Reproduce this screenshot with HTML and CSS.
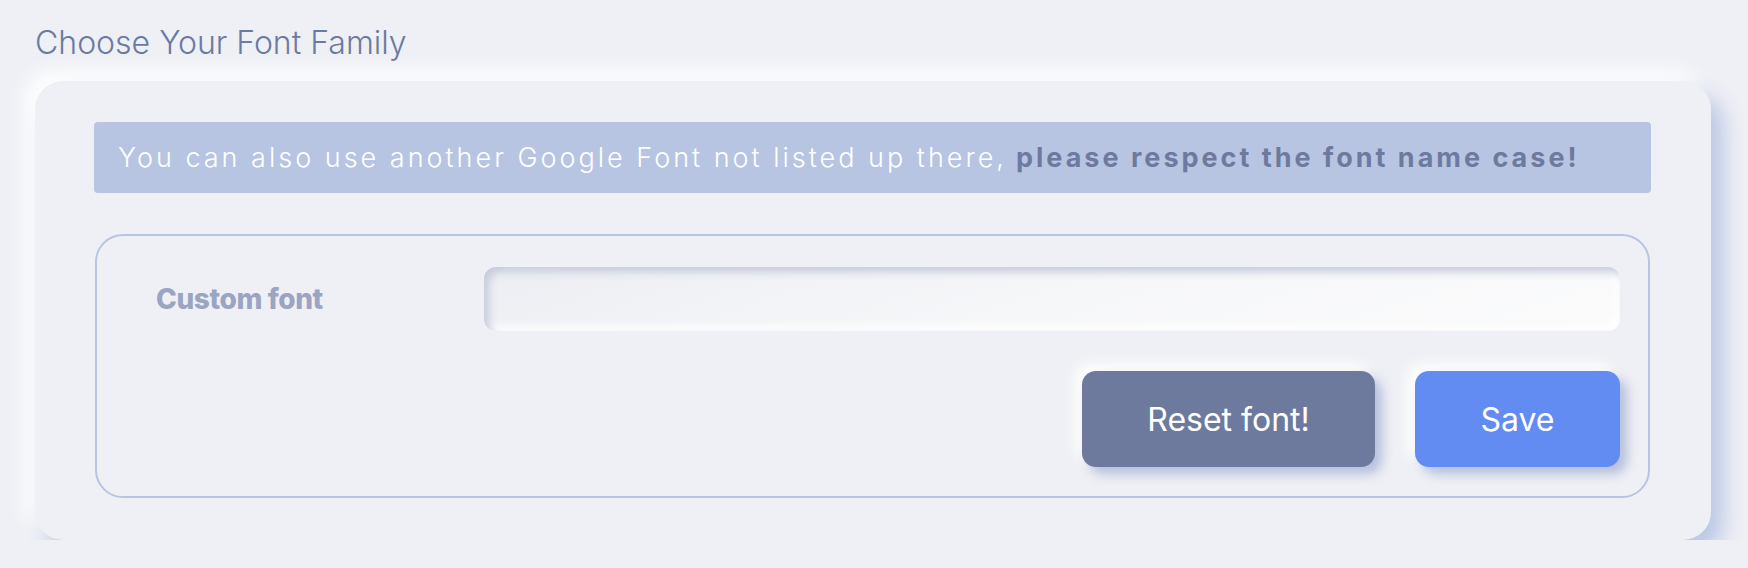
FILE: index.html
```html
<!DOCTYPE html>
<html lang="en">
<head>
    <meta charset="UTF-8">
    <meta name="viewport" content="width=device-width, initial-scale=1.0">
    <title>Font settings</title>
    <link rel="stylesheet" href="styles.css">
</head>
<body>
    <div class="section">
        <h2 class="section-title">Choose Your Font Family</h2>
        <div class="card">
            <div class="notice">
                You can also use another Google Font not listed up there, <b>please respect the font name case!</b>
            </div>
            <div class="font-box">
                <div class="font-row">
                    <label class="font-label" for="custom_font">Custom font</label>
                    <input id="custom_font" class="font-input" type="text">
                </div>
                <div class="font-actions">
                    <button class="btn btn-reset">Reset font!</button>
                    <button class="btn btn-save">Save</button>
                </div>
            </div>
        </div>
    </div>
</body>
</html>
```

FILE: styles.css
```css
* {
    margin: 0;
    padding: 0;
    box-sizing: border-box;
}

body {
    background-color: #eff0f5;
    font-family: Inter, "Noto Sans", sans-serif;
}

.section {
    padding: 24px 37px 0 35px;
}

.section-title {
    font-size: 32px;
    font-weight: 300;
    line-height: 38px;
    color: #6b7aa1;
    margin-bottom: 19px;
}

.card {
    height: 459px;
    padding: 41px 60px 42px 59px;
    border-radius: 28px;
    background-color: #eff0f5;
    box-shadow: 12px 14px 22px #b9c6e4, -10px -10px 20px #ffffff;
}

.notice {
    height: 71px;
    padding-left: 24px;
    display: flex;
    align-items: center;
    white-space: nowrap;
    border-radius: 4px;
    background-color: #b8c5e2;
    color: #ffffff;
    font-size: 27px;
    font-weight: 300;
    letter-spacing: 3px;
}

.notice b {
    font-weight: 700;
    color: #6d7a9e;
    margin-left: 9px;
}

.font-box {
    margin: 41px 1px 0 1px;
    height: 264px;
    padding: 31px 28px 29px 59px;
    border: 2px solid #b8c5e2;
    border-radius: 28px;
    display: flex;
    flex-direction: column;
    justify-content: space-between;
}

.font-row {
    display: flex;
    align-items: center;
}

.font-label {
    width: 328px;
    flex-shrink: 0;
    font-size: 28px;
    font-weight: 800;
    color: #9ba5c2;
    letter-spacing: -0.4px;
}

.font-input {
    flex: 1;
    height: 64px;
    border: none;
    outline: none;
    border-radius: 12px;
    background: linear-gradient(160deg, #eceef3 0%, #f6f7f9 50%, #fbfbfc 100%);
    box-shadow: inset 5px 5px 8px #c6ccdb, inset -5px -5px 8px #ffffff;
}

.font-actions {
    display: flex;
    justify-content: flex-end;
    gap: 40px;
}

.btn {
    height: 96px;
    border: none;
    border-radius: 14px;
    color: #ffffff;
    font-family: Inter, "Noto Sans", sans-serif;
    font-size: 32px;
    font-weight: 400;
    cursor: pointer;
    box-shadow: 7px 7px 12px #b3bedb, -7px -7px 14px #ffffff;
}

.btn-reset {
    width: 293px;
    background-color: #6d7a9e;
}

.btn-save {
    width: 205px;
    background-color: #638cf2;
}
```
